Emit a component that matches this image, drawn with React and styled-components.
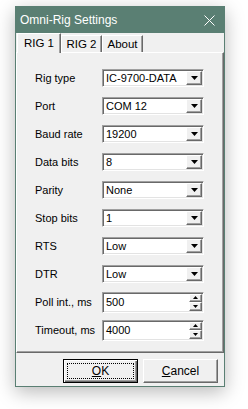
import React from "react";
import styled, { createGlobalStyle } from "styled-components";

const GlobalStyle = createGlobalStyle`
  body {
    margin: 0;
    background: #ffffff;
    font-family: "Liberation Sans", Arial, sans-serif;
  }
`;

const rows = [
  { label: "Rig type", value: "IC-9700-DATA", kind: "combo" },
  { label: "Port", value: "COM 12", kind: "combo" },
  { label: "Baud rate", value: "19200", kind: "combo" },
  { label: "Data bits", value: "8", kind: "combo" },
  { label: "Parity", value: "None", kind: "combo" },
  { label: "Stop bits", value: "1", kind: "combo" },
  { label: "RTS", value: "Low", kind: "combo" },
  { label: "DTR", value: "Low", kind: "combo" },
  { label: "Poll int., ms", value: "500", kind: "spin" },
  { label: "Timeout, ms", value: "4000", kind: "spin" },
];

const Screen = styled.div`
  width: 248px;
  height: 409px;
  padding: 6px 0 0 15px;
  box-sizing: border-box;
  overflow: hidden;
`;

const Window = styled.div`
  width: 210px;
  height: 381px;
  box-sizing: border-box;
  border: 1px solid #5a7f73;
  background: #f0f0f0;
  display: flex;
  flex-direction: column;
  box-shadow: 0 5px 18px rgba(0, 0, 0, 0.28);
`;

const TitleBar = styled.div`
  height: 26px;
  flex: none;
  background: #5a7f73;
  color: #ffffff;
  font-size: 12px;
  display: flex;
  align-items: center;
  justify-content: space-between;
  padding: 0 9px 0 4px;
`;

const TabRow = styled.div`
  height: 19px;
  flex: none;
  display: flex;
  align-items: flex-end;
  padding-left: 1px;
  position: relative;
  z-index: 1;
`;

const Tab = styled.div`
  width: ${(p) => p.$w}px;
  height: ${(p) => (p.$active ? 20 : 17)}px;
  margin-bottom: ${(p) => (p.$active ? -1 : 0)}px;
  box-sizing: border-box;
  background: #f0f0f0;
  border-top: 1px solid #ffffff;
  border-left: 1px solid #ffffff;
  border-right: 1px solid #696969;
  box-shadow: inset -1px 0 #a0a0a0;
  font-size: 11.5px;
  color: #000;
  display: flex;
  justify-content: center;
  padding-top: ${(p) => (p.$active ? 3 : 2)}px;
`;

const Panel = styled.div`
  height: 301px;
  flex: none;
  box-sizing: border-box;
  border-top: 1px solid #ffffff;
  border-left: 1px solid #ffffff;
  border-right: 1px solid #696969;
  border-bottom: 1px solid #696969;
  box-shadow: inset -1px -1px #a0a0a0;
  padding: 11px 0 0 18px;
`;

const Row = styled.div`
  height: 28px;
  display: grid;
  grid-template-columns: 67px 102px;
  align-items: center;
`;

const Label = styled.span`
  font-size: 11px;
  color: #000;
`;

const Field = styled.div`
  height: ${(p) => (p.$spin ? 21 : 18)}px;
  box-sizing: border-box;
  background: #ffffff;
  border-top: 1px solid #a0a0a0;
  border-left: 1px solid #a0a0a0;
  border-right: 1px solid #ffffff;
  border-bottom: 1px solid #ffffff;
  box-shadow: inset 1px 1px #696969, inset -1px -1px #e3e3e3;
  padding: 1px 1px 1px 2px;
  display: flex;
  align-items: center;
  font-size: 11px;
  color: #000;
`;

const Value = styled.span`
  flex: 1;
  padding-left: 1px;
`;

const raised = `
  box-sizing: border-box;
  background: #f0f0f0;
  border-top: 1px solid #ffffff;
  border-left: 1px solid #ffffff;
  border-right: 1px solid #696969;
  border-bottom: 1px solid #696969;
  box-shadow: inset -1px -1px #a0a0a0;
  display: flex;
  align-items: center;
  justify-content: center;
`;

const DropButton = styled.div`
  ${raised}
  width: 16px;
  height: 14px;
`;

const SpinStack = styled.div`
  width: 13px;
  height: 17px;
  display: flex;
  flex-direction: column;
`;

const SpinButton = styled.div`
  ${raised}
  flex: 1;
`;

const Footer = styled.div`
  flex: 1;
  display: flex;
  justify-content: flex-end;
  gap: 5px;
  padding: 6px 6px 0 0;
`;

const Button = styled.div`
  ${raised}
  width: 75px;
  height: 24px;
  font-size: 12px;
  color: #000;
  ${(p) =>
    p.$default &&
    `
    border: 1px solid #000;
    box-shadow: inset 1px 1px #ffffff, inset -1px -1px #696969, inset -2px -2px #a0a0a0;
    outline: 1px dotted #000;
    outline-offset: -5px;
  `}
`;

const Arrow = ({ up, w = 7 }) => {
  const h = Math.ceil(w / 2);
  return (
    <svg width={w} height={h} viewBox={`0 0 ${w} ${h}`}>
      <polygon
        points={up ? `${w / 2},0 ${w},${h} 0,${h}` : `0,0 ${w},0 ${w / 2},${h}`}
        fill="#000"
      />
    </svg>
  );
};

const Combo = ({ value }) => (
  <Field>
    <Value>{value}</Value>
    <DropButton>
      <Arrow />
    </DropButton>
  </Field>
);

const Spin = ({ value }) => (
  <Field $spin>
    <Value>{value}</Value>
    <SpinStack>
      <SpinButton>
        <Arrow up w={5} />
      </SpinButton>
      <SpinButton>
        <Arrow w={5} />
      </SpinButton>
    </SpinStack>
  </Field>
);

export default function App() {
  return (
    <Screen>
      <GlobalStyle />
      <Window>
        <TitleBar>
          <span>Omni-Rig Settings</span>
          <svg width="11" height="11" viewBox="0 0 11 11">
            <path d="M0.5 0.5 L10.5 10.5 M10.5 0.5 L0.5 10.5" stroke="#fff" strokeWidth="1" />
          </svg>
        </TitleBar>
        <TabRow>
          <Tab $w={44} $active>RIG 1</Tab>
          <Tab $w={41}>RIG 2</Tab>
          <Tab $w={41}>About</Tab>
        </TabRow>
        <Panel>
          {rows.map((r) => (
            <Row key={r.label}>
              <Label>{r.label}</Label>
              {r.kind === "spin" ? <Spin value={r.value} /> : <Combo value={r.value} />}
            </Row>
          ))}
        </Panel>
        <Footer>
          <Button $default>
            <span>
              <u>O</u>K
            </span>
          </Button>
          <Button>
            <span>
              <u>C</u>ancel
            </span>
          </Button>
        </Footer>
      </Window>
    </Screen>
  );
}
